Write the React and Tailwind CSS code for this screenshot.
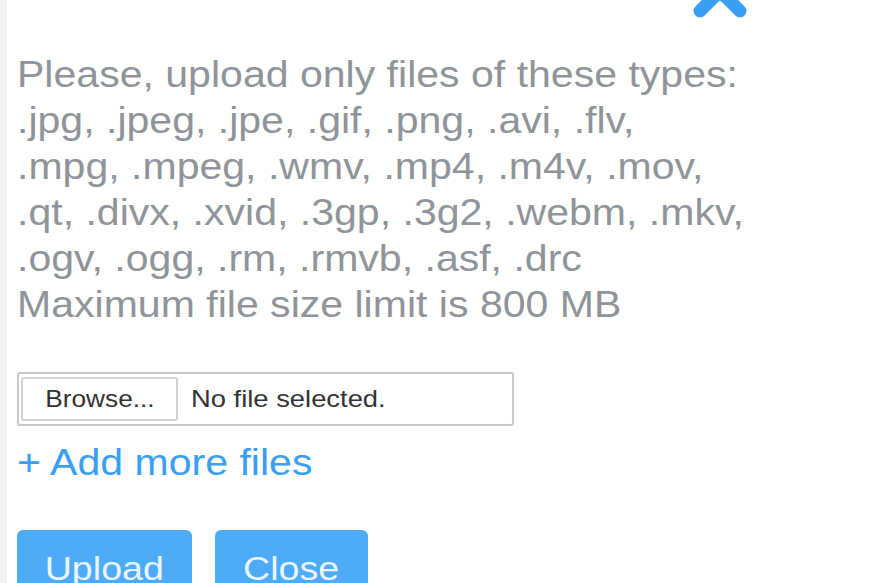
import React from 'react';

const types = [
  'Please, upload only files of these types:',
  '.jpg, .jpeg, .jpe, .gif, .png, .avi, .flv,',
  '.mpg, .mpeg, .wmv, .mp4, .m4v, .mov,',
  '.qt, .divx, .xvid, .3gp, .3g2, .webm, .mkv,',
  '.ogv, .ogg, .rm, .rmvb, .asf, .drc',
  'Maximum file size limit is 800 MB',
];

// the screenshot's glyphs are a bit wider than Arial, so stretch the text
const Wide = ({ children, center }) => (
  <span className={`inline-block whitespace-nowrap scale-x-[1.14] ${center ? 'origin-center' : 'origin-left'}`}>
    {children}
  </span>
);

export default function App() {
  return (
    <div className="relative flex h-[583px] w-[881px] overflow-hidden bg-white font-['Liberation_Sans',Arial,sans-serif]">
      {/* page edge behind the dialog */}
      <div className="w-[7px] shrink-0 bg-[#f2f2f2]" />

      {/* close icon, only its lower half is on screen */}
      <svg className="absolute left-[690px] top-[-30px]" width="60" height="50" viewBox="0 0 60 50">
        <path d="M10 41 L30 21 L50 41" fill="none" stroke="#3a9ef5" strokeWidth="13" strokeLinecap="round" strokeLinejoin="round" />
      </svg>

      <div className="pl-[10px] pt-[52px]">
        <div className="text-[36px] leading-[46px] text-[#909499]">
          {types.map((t) => (
            <div key={t}>
              <Wide>{t}</Wide>
            </div>
          ))}
        </div>

        <div className="mt-[44px] flex h-[54px] w-[497px] items-center rounded-[3px] border-2 border-[#c8c8c8] px-[2px]">
          <button className="h-[44px] w-[157px] shrink-0 rounded-[3px] border-2 border-[#d2d2d2] bg-white text-[23px] text-[#333]">
            <Wide center>Browse...</Wide>
          </button>
          <span className="ml-[13px] text-[24px] text-[#333]">
            <Wide>No file selected.</Wide>
          </span>
        </div>

        <div className="mt-[14px] text-[36px] leading-[46px] text-[#3a9ef5]">
          <Wide>+ Add more files</Wide>
        </div>

        <div className="mt-[44px] flex items-start gap-[23px]">
          <button className="h-[64px] w-[175px] shrink-0 rounded-[6px] bg-[#4dabf7] pt-[13px] text-[33px] leading-[38px] text-[#eaf5ff]">
            <Wide center>Upload</Wide>
          </button>
          <button className="h-[64px] w-[153px] shrink-0 rounded-[6px] bg-[#4dabf7] pt-[13px] text-[33px] leading-[38px] text-[#eaf5ff]">
            <Wide center>Close</Wide>
          </button>
        </div>
      </div>
    </div>
  );
}
